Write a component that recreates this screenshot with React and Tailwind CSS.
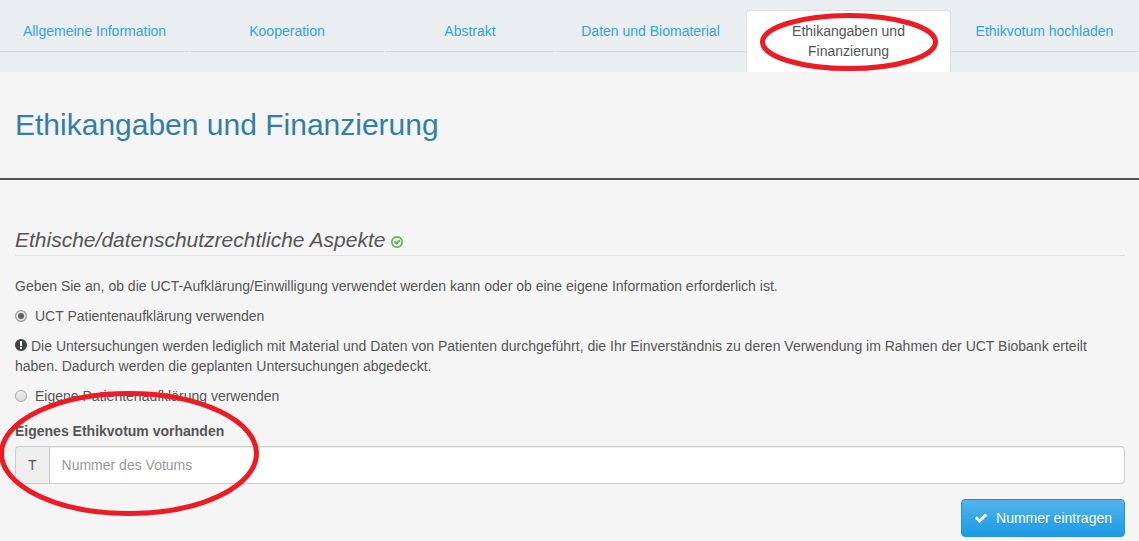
import { useState } from "react";

const tabs = [
  "Allgemeine Information",
  "Kooperation",
  "Abstrakt",
  "Daten und Biomaterial",
  "Ethikangaben und Finanzierung",
  "Ethikvotum hochladen",
];
const ACTIVE_TAB = 4;

function CheckIcon() {
  return (
    <svg viewBox="0 0 1792 1792" className="size-3.5 shrink-0 fill-current" aria-hidden="true">
      <path d="M1671 566q0 40-28 68l-724 724-136 136q-28 28-68 28t-68-28l-136-136-362-362q-28-28-28-68t28-68l136-136q28-28 68-28t68 28l294 295 656-657q28-28 68-28t68 28l136 136q28 28 28 68z" />
    </svg>
  );
}

function CheckCircleIcon() {
  return (
    <svg viewBox="128 128 1536 1536" className="mt-1 size-3 shrink-0 fill-[#5cb85c]" aria-hidden="true">
      <path d="M1299 813l-422 422q-19 19-45 19t-45-19l-294-294q-19-19-19-45t19-45l102-102q19-19 45-19t45 19l147 147 275-275q19-19 45-19t45 19l102 102q19 19 19 45t-19 45zm141 83q0-148-73-273t-198-198-273-73-273 73-198 198-73 273 73 273 198 198 273 73 273-73 198-198 73-273zm224 0q0 209-103 385.500t-279.500 279.500-385.500 103-385.500-103-279.500-279.500-103-385.500 103-385.500 279.500-279.500 385.500-103 385.500 103 279.500 279.500 103 385.500z" />
    </svg>
  );
}

function ExclamationCircleIcon() {
  return (
    <svg viewBox="128 128 1536 1536" className="mr-1 inline-block size-3 fill-[#444] align-baseline" aria-hidden="true">
      <path d="M896 128q209 0 385.500 103t279.500 279.500 103 385.500-103 385.500-279.500 279.500-385.500 103-385.500-103-279.500-279.500-103-385.500 103-385.500 279.500-279.500 385.500-103zm128 1247v-190q0-14-9-23.500t-22-9.500h-192q-13 0-23 10t-10 23v190q0 13 10 23t23 10h192q13 0 22-9.500t9-23.500zm-2-344l18-621q0-12-10-18-10-8-24-8h-220q-14 0-24 8-10 6-10 18l17 621q0 10 10 17.500t24 7.500h185q14 0 23.500-7.500t10.500-17.500z" />
    </svg>
  );
}

function Tab({ label, active }) {
  if (active) {
    return (
      <li className="relative">
        <a
          href="#"
          aria-current="page"
          className="block rounded-t border border-b-0 border-[#ddd] bg-white px-5 pt-2.5 pb-[11px] text-center text-[#555]"
        >
          {label}
        </a>
        <svg
          viewBox="0 0 178 58"
          className="pointer-events-none absolute top-[3px] left-3.5 h-[58px] w-[178px]"
          aria-hidden="true"
        >
          <ellipse cx="89" cy="29" rx="86.500" ry="26.500" fill="none" stroke="#ed1c24" strokeWidth="5" />
        </svg>
      </li>
    );
  }
  return (
    <li>
      <a
        href="#"
        className="mr-px block border-b border-[#d6dadd] px-5 pt-[11px] pb-2.5 text-center text-[#2fa4e7]"
      >
        {label}
      </a>
    </li>
  );
}

function Choice({ id, label, checked, onChange }) {
  return (
    <div className="flex items-center gap-2">
      <input
        type="radio"
        id={id}
        name="aufklaerung"
        checked={checked}
        onChange={onChange}
        className="size-3 appearance-none rounded-full border border-[#a6a6a6] bg-linear-to-b from-[#eee] to-[#ddd] checked:bg-none checked:bg-[#606060] checked:shadow-[inset_0_0_0_2px_#e4e4e4]"
      />
      <label htmlFor={id}>{label}</label>
    </div>
  );
}

export default function App() {
  const [choice, setChoice] = useState("uct");
  const [votum, setVotum] = useState("");

  return (
    <div className="min-h-screen overflow-hidden bg-[#f5f5f5] font-['Liberation_Sans',Arial,sans-serif] text-sm leading-5 text-[#555]">
      <nav className="bg-[#ebeef1] pt-2.5">
        <ul className="grid grid-cols-[190fr_195fr_171fr_190fr_205fr_188fr]">
          {tabs.map((label, i) => (
            <Tab key={label} label={label} active={i === ACTIVE_TAB} />
          ))}
        </ul>
      </nav>

      <header className="border-b-2 border-[#555] px-[15px] pt-9 pb-9">
        <h1 className="text-3xl leading-[34px] text-[#317eac]">Ethikangaben und Finanzierung</h1>
      </header>

      <main className="pt-[45px] pr-3.5 pb-1 pl-[15px]">
        <h2 className="flex items-center gap-1.5 border-b border-[#e2e2e2] text-[21px] leading-[30px] italic">
          Ethische/datenschutzrechtliche Aspekte
          <CheckCircleIcon />
        </h2>

        <div className="mt-5 flex flex-col gap-2.5">
          <p>
            Geben Sie an, ob die UCT-Aufklärung/Einwilligung verwendet werden kann oder ob eine eigene Information
            erforderlich ist.
          </p>
          <Choice
            id="uct"
            label="UCT Patientenaufklärung verwenden"
            checked={choice === "uct"}
            onChange={() => setChoice("uct")}
          />
          <p>
            <ExclamationCircleIcon />
            Die Untersuchungen werden lediglich mit Material und Daten von Patienten durchgeführt, die Ihr
            Einverständnis zu deren Verwendung im Rahmen der UCT Biobank erteilt haben. Dadurch werden die geplanten
            Untersuchungen abgedeckt.
          </p>
          <Choice
            id="eigene"
            label="Eigene Patientenaufklärung verwenden"
            checked={choice === "eigene"}
            onChange={() => setChoice("eigene")}
          />
        </div>

        <div className="relative mt-[15px]">
          <label htmlFor="votum" className="mb-[5px] block font-bold">
            Eigenes Ethikvotum vorhanden
          </label>
          <div className="flex">
            <span className="flex items-center rounded-l border border-r-0 border-[#ccc] bg-[#eee] px-3">T</span>
            <input
              type="text"
              id="votum"
              value={votum}
              onChange={(e) => setVotum(e.target.value)}
              placeholder="Nummer des Votums"
              className="h-[38px] min-w-0 flex-1 rounded-r border border-[#ccc] bg-white px-3 shadow-[inset_0_1px_1px_rgba(0,0,0,0.075)] placeholder:text-[#999]"
            />
          </div>
          <svg
            viewBox="0 0 260 125"
            className="pointer-events-none absolute -top-[30px] -left-4 h-[125px] w-[260px]"
            aria-hidden="true"
          >
            <ellipse cx="130" cy="62.500" rx="127.500" ry="60" fill="none" stroke="#ed1c24" strokeWidth="5" />
          </svg>
        </div>

        <div className="mt-[15px] flex justify-end">
          <button
            type="button"
            className="flex h-[38px] items-center gap-2 rounded border border-[#2295d8] bg-linear-to-b from-[#54b4eb] via-[#2fa4e7] via-60% to-[#1d9ce5] px-3 text-white text-shadow-[0_1px_0_rgba(0,0,0,0.1)]"
          >
            <CheckIcon />
            Nummer eintragen
          </button>
        </div>
      </main>
    </div>
  );
}
